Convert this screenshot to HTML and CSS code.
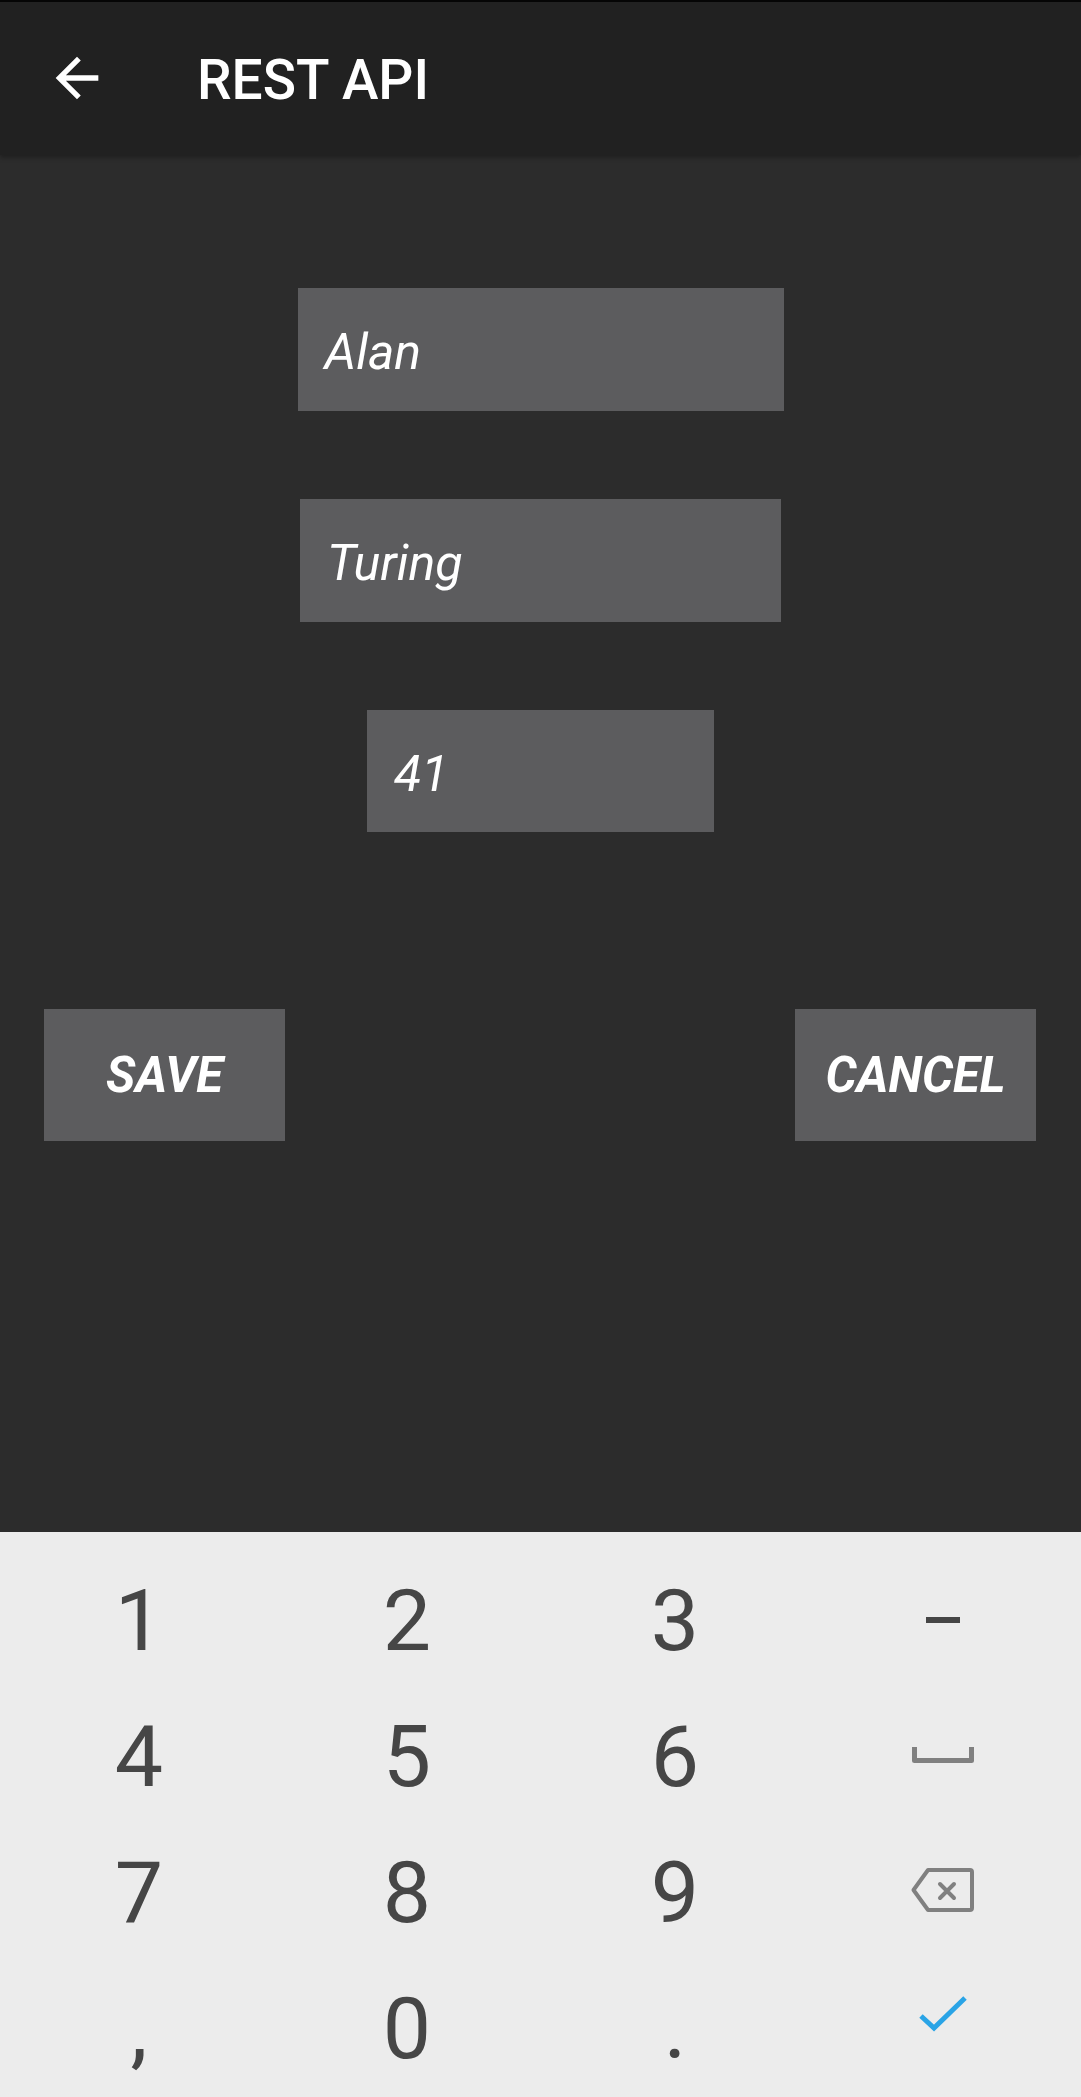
FILE: index.html
```html
<!DOCTYPE html>
<html>
<head>
<meta charset="utf-8">
<link rel="stylesheet" href="styles.css">
</head>
<body>
<div class="screen">
  <header class="appbar">
    <svg class="back" viewBox="0 0 24 24" width="64" height="64"><path fill="#fff" d="M20 11H7.83l5.59-5.59L12 4l-8 8 8 8 1.41-1.41L7.83 13H20v-2z"/></svg>
    <div class="title">REST API</div>
  </header>
  <main class="content">
    <div class="field f1">Alan</div>
    <div class="field f2">Turing</div>
    <div class="field f3">41</div>
    <div class="buttons">
      <div class="btn">SAVE</div>
      <div class="btn">CANCEL</div>
    </div>
  </main>
  <section class="keyboard">
    <div class="key">1</div>
    <div class="key">2</div>
    <div class="key">3</div>
    <div class="key"><svg width="80" height="80" viewBox="0 0 80 80"><rect x="23" y="36" width="34" height="6" fill="#454545"/></svg></div>
    <div class="key">4</div>
    <div class="key">5</div>
    <div class="key">6</div>
    <div class="key"><svg width="80" height="80" viewBox="0 0 80 80"><path d="M11.5 30 V43.5 H68.5 V30" fill="none" stroke="#808080" stroke-width="5" stroke-linejoin="round"/></svg></div>
    <div class="key">7</div>
    <div class="key">8</div>
    <div class="key">9</div>
    <div class="key"><svg width="80" height="80" viewBox="0 0 80 80"><path d="M10.5 37 L25 17 H67 Q69 17 69 19 V55 Q69 57 67 57 H25 Z" fill="none" stroke="#808080" stroke-width="4" stroke-linejoin="round"/><path d="M37 31 L51 45 M51 31 L37 45" stroke="#808080" stroke-width="4" stroke-linecap="round"/></svg></div>
    <div class="key">,</div>
    <div class="key">0</div>
    <div class="key">.</div>
    <div class="key"><svg width="80" height="80" viewBox="0 0 80 80"><polyline points="18,27 31,39 62,9" fill="none" stroke="#2aa4e6" stroke-width="5"/></svg></div>
  </section>
</div>
</body>
</html>
```

FILE: styles.css
```css
html, body {
  margin: 0;
  padding: 0;
}
body {
  background: #2c2c2c;
  font-family: Roboto, "Liberation Sans", sans-serif;
}
.screen {
  width: 1081px;
  height: 2097px;
  overflow: hidden;
  display: flex;
  flex-direction: column;
  background: #2c2c2c;
}
.appbar {
  box-sizing: border-box;
  height: 155px;
  border-top: 2px solid #050505;
  background: #212121;
  display: flex;
  align-items: center;
  box-shadow: 0 2px 5px rgba(0,0,0,0.35);
  position: relative;
  z-index: 1;
  flex: none;
}
.back {
  margin-left: 45px;
  margin-top: -1px;
  flex: none;
}
.title {
  margin-left: 88px;
  color: #fff;
  font-size: 55px;
  font-weight: 500;
  line-height: 1;
  margin-top: 4px;
}
.content {
  flex: 1;
  padding-top: 133px;
  display: flex;
  flex-direction: column;
  align-items: center;
}
.field {
  box-sizing: border-box;
  height: 123px;
  background: #5c5c5e;
  color: #fff;
  font-style: italic;
  font-size: 50px;
  line-height: 50px;
  padding: 39px 27px 0;
  margin-bottom: 88px;
}
.f1 { width: 486px; }
.f2 { width: 481px; }
.f3 { width: 347px; height: 122px; margin-bottom: 0; }
.buttons {
  align-self: stretch;
  display: flex;
  justify-content: space-between;
  padding: 0 45px 0 44px;
  margin-top: 177px;
}
.btn {
  width: 241px;
  height: 132px;
  background: #5c5c5e;
  color: #fff;
  font-weight: 700;
  font-style: italic;
  font-size: 49px;
  display: flex;
  align-items: center;
  justify-content: center;
}
.keyboard {
  flex: none;
  box-sizing: border-box;
  height: 565px;
  background: #ececec;
  padding: 21px 4px 0 5px;
  display: grid;
  grid-template-columns: repeat(4, 1fr);
  grid-auto-rows: 136px;
}
.key {
  display: flex;
  align-items: center;
  justify-content: center;
  color: #464646;
  font-size: 86px;
  line-height: 1;
}
.key svg {
  display: block;
}
```
